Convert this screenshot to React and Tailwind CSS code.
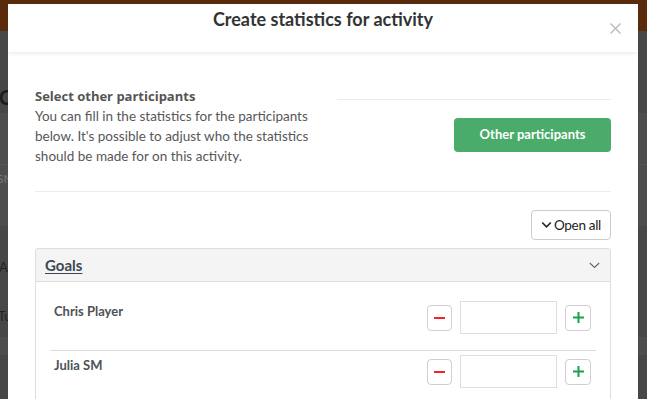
import React from "react";

function Row({ name }) {
  return (
    <div className="flex items-start justify-between pl-[4px] pr-[5px] pt-[4px] pb-[16px] border-b border-[#dcdcdc]">
      <div className="text-[13px] font-bold leading-[20px] text-[#4d5257]">{name}</div>
      <div className="flex items-center gap-[8px]">
        <button className="w-[25px] h-[26px] border border-[#cfcfcf] rounded-[4px] bg-white flex items-center justify-center">
          <span className="block w-[11px] h-[2px] bg-[#f2232e]"></span>
        </button>
        <div className="w-[97px] h-[33px] border border-[#dddde3] bg-white"></div>
        <button className="w-[26px] h-[26px] border border-[#cfcfcf] rounded-[4px] bg-white flex items-center justify-center">
          <svg width="13" height="13" viewBox="0 0 13 13">
            <path d="M6.5 1v11M1 6.5h11" stroke="#18a24a" strokeWidth="2" />
          </svg>
        </button>
      </div>
    </div>
  );
}

export default function App() {
  return (
    <div
      className="relative w-[647px] h-[399px] overflow-hidden bg-[#474747]"
      style={{ fontFamily: "Lato, 'Open Sans', sans-serif" }}
    >
      {/* background page */}
      <div className="flex flex-col">
        <div className="h-[31px] bg-[#5a2a0c]"></div>
        <div className="h-[82px] bg-[#474747] relative">
          <span className="absolute left-[-1px] top-[54px] text-[20px] font-bold leading-[24px] text-[#1c1c1c]">C</span>
        </div>
        <div className="h-[52px] bg-[#4d4d4d] border-b border-[#555]"></div>
        <div className="h-[61px] bg-[#4d4d4d] relative">
          <span className="absolute left-[-3px] top-[6px] text-[12px] leading-[16px] text-[#777]">SM</span>
        </div>
        <div className="h-[111px] bg-[#474747] relative">
          <span className="absolute left-[-1px] top-[32px] text-[13px] leading-[18px] text-[#222]">Ac</span>
          <span className="absolute left-[-2px] top-[81px] text-[13px] leading-[18px] text-[#222]">Tu</span>
        </div>
        <div className="h-[18px] bg-[#4d4d4d]"></div>
        <div className="h-[44px] bg-[#474747]"></div>
      </div>

      {/* modal */}
      <div className="absolute left-[8px] top-[4px] w-[630px] h-[395px] bg-white overflow-hidden">
        <div className="relative h-[48px] shadow-[0_2px_4px_rgba(0,0,0,0.07)] z-10 bg-white">
          <div className="pt-[2px] text-center text-[18px] leading-[26px] font-bold text-[#333]">
            Create statistics for activity
          </div>
          <button className="absolute right-[17px] top-[19px] w-[11px] h-[11px]">
            <svg width="11" height="11" viewBox="0 0 11 11">
              <path d="M0.5 0.5l10 10M10.5 0.5l-10 10" stroke="#b9b9b9" strokeWidth="1.3" />
            </svg>
          </button>
        </div>

        <div className="px-[27px] pt-[34px]">
          <div className="flex items-start pb-[25px] border-b border-[#ececec]">
            <div className="w-[276px] text-[13.5px] leading-[20px] text-[#575757]">
              <div className="font-bold text-[#555]" style={{ fontFamily: "'Open Sans', sans-serif", fontSize: "13px" }}>
                Select other participants
              </div>
              <div>
                You can fill in the statistics for the participants below. It's possible to adjust who the statistics should be made for on this activity.
              </div>
            </div>
            <div className="flex-1 ml-[26px] flex flex-col">
              <div className="mt-[13px] h-px bg-[#ececec]"></div>
              <button className="mt-[18px] self-end w-[157px] h-[34px] rounded-[4px] bg-[#4aab6b] text-white text-[13px] font-bold">
                Other participants
              </button>
            </div>
          </div>

          <div className="flex justify-end mt-[18px]">
            <button className="h-[30px] w-[80px] border border-[#cccccc] rounded-[4px] bg-white flex items-center justify-center gap-[2px] text-[13.5px] text-[#222]">
              <svg width="11" height="8" viewBox="0 0 11 8">
                <path d="M1.2 1.5l4.3 4.3 4.3-4.3" fill="none" stroke="#222" strokeWidth="1.6" />
              </svg>
              <span className="tracking-[-0.3px]">Open all</span>
            </button>
          </div>

          <div className="mt-[8px]">
            <div className="h-[34px] border border-[#dddddd] rounded-t-[3px] bg-[#f4f4f4] flex items-center justify-between pl-[9px] pr-[10px]">
              <span className="text-[15px] font-bold underline underline-offset-[2px] text-[#3a4753]">Goals</span>
              <svg width="11" height="7" viewBox="0 0 11 7">
                <path d="M0.8 1l4.7 4.5 4.7-4.5" fill="none" stroke="#666" strokeWidth="1.1" />
              </svg>
            </div>
            <div className="border-x border-[#dddddd] px-[14px] pt-[15px] h-[200px]">
              <Row name="Chris Player" />
              <Row name="Julia SM" />
            </div>
          </div>
        </div>
      </div>
    </div>
  );
}
